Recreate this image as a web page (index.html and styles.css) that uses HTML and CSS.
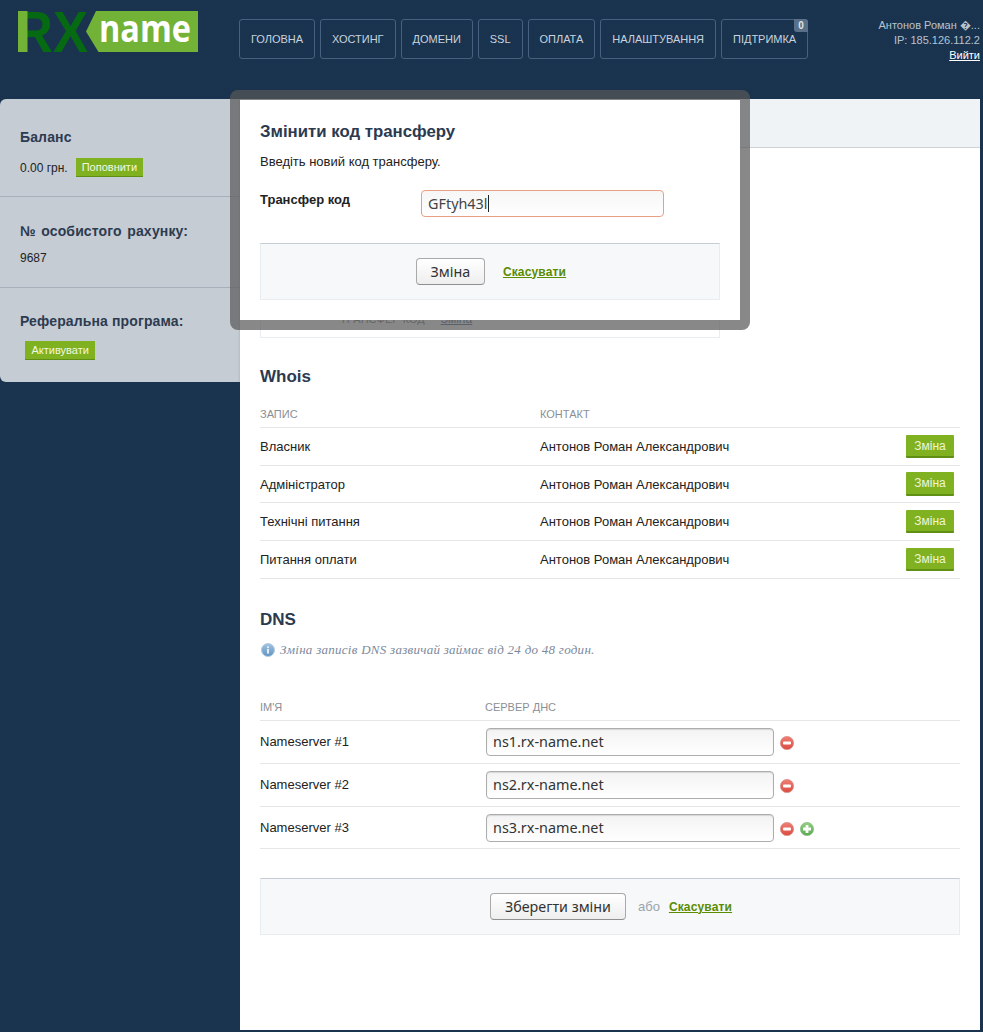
FILE: index.html
```html
<!DOCTYPE html>
<html lang="uk">
<head>
<meta charset="utf-8">
<title>RX name</title>
<link rel="stylesheet" href="styles.css">
</head>
<body>
<header class="top">
  <a class="logo">
    <svg width="180" height="41" viewBox="0 0 180 41">
      <path class="logo-bg" d="M78 0H180V41H80.5L68 20.5Z"/>
      <text class="logo-rx" x="-3" y="41" textLength="73" lengthAdjust="spacingAndGlyphs">RX</text>
      <rect class="logo-bar" x="0" y="0" width="9.5" height="41"/>
      <text class="logo-name" x="81" y="30.5" textLength="92" lengthAdjust="spacingAndGlyphs">name</text>
    </svg>
  </a>
  <nav class="nav">
    <a class="nav-item">ГОЛОВНА</a>
    <a class="nav-item">ХОСТИНГ</a>
    <a class="nav-item">ДОМЕНИ</a>
    <a class="nav-item">SSL</a>
    <a class="nav-item">ОПЛАТА</a>
    <a class="nav-item">НАЛАШТУВАННЯ</a>
    <a class="nav-item nav-badged">ПІДТРИМКА<span class="badge">0</span></a>
  </nav>
  <div class="user">
    <div>Антонов Роман �...</div>
    <div>IP: 185.126.112.2</div>
    <a class="logout">Вийти</a>
  </div>
</header>

<div class="layout">
  <aside class="side">
    <section class="side-box side-a">
      <h3>Баланс</h3>
      <div class="side-row">0.00 грн. <a class="btn-small btn-top">Поповнити</a></div>
    </section>
    <section class="side-box side-b">
      <h3>№ особистого рахунку:</h3>
      <div class="side-row">9687</div>
    </section>
    <section class="side-box side-c">
      <h3>Реферальна програма:</h3>
      <a class="btn-small btn-ref">Активувати</a>
    </section>
  </aside>

  <main class="main">
    <div class="tabs"></div>
    <div class="content">
      <div class="hidden-box"><span class="hb-label">ТРАНСФЕР КОД</span><a class="hb-link">Зміна</a></div>

      <h2 class="h-whois">Whois</h2>
      <div class="grid-row whois head"><span>ЗАПИС</span><span>КОНТАКТ</span><span></span></div>
      <div class="grid-row whois r38"><span>Власник</span><span>Антонов Роман Александрович</span><a class="btn-change">Зміна</a></div>
      <div class="grid-row whois r37"><span>Адміністратор</span><span>Антонов Роман Александрович</span><a class="btn-change">Зміна</a></div>
      <div class="grid-row whois r38"><span>Технічні питання</span><span>Антонов Роман Александрович</span><a class="btn-change">Зміна</a></div>
      <div class="grid-row whois r38"><span>Питання оплати</span><span>Антонов Роман Александрович</span><a class="btn-change">Зміна</a></div>

      <h2 class="h-dns">DNS</h2>
      <p class="note">
        <svg class="info" width="14" height="14" viewBox="0 0 14 14"><defs><linearGradient id="gb" x1="0" y1="0" x2="0" y2="1"><stop offset="0" stop-color="#a3c4e0"/><stop offset="1" stop-color="#5f92c2"/></linearGradient><linearGradient id="gr" x1="0" y1="0" x2="0" y2="1"><stop offset="0" stop-color="#ee8076"/><stop offset="1" stop-color="#dc4a40"/></linearGradient><linearGradient id="gg" x1="0" y1="0" x2="0" y2="1"><stop offset="0" stop-color="#93d07f"/><stop offset="1" stop-color="#57a94f"/></linearGradient></defs><circle cx="7" cy="7" r="6.5" fill="url(#gb)" stroke="#b3cbe0"/><rect x="6.1" y="6" width="1.8" height="4.6" fill="#eef4fa"/><rect x="6.1" y="3.4" width="1.8" height="1.7" fill="#eef4fa"/></svg>
        <em>Зміна записів DNS зазвичай займає від 24 до 48 годин.</em>
      </p>
      <div class="grid-row dns head"><span>ІМ'Я</span><span>СЕРВЕР ДНС</span></div>
      <div class="grid-row dns r43"><span>Nameserver #1</span><span class="ns"><input class="field" value="ns1.rx-name.net">
        <svg class="ico" width="14" height="14" viewBox="0 0 14 14"><circle cx="7" cy="7" r="6.6" fill="url(#gr)" stroke="#d98f88" stroke-width=".8"/><rect x="3" y="5.6" width="8" height="2.8" rx="1" fill="#fff"/></svg></span></div>
      <div class="grid-row dns r43"><span>Nameserver #2</span><span class="ns"><input class="field" value="ns2.rx-name.net">
        <svg class="ico" width="14" height="14" viewBox="0 0 14 14"><circle cx="7" cy="7" r="6.6" fill="url(#gr)" stroke="#d98f88" stroke-width=".8"/><rect x="3" y="5.6" width="8" height="2.8" rx="1" fill="#fff"/></svg></span></div>
      <div class="grid-row dns r42"><span>Nameserver #3</span><span class="ns"><input class="field" value="ns3.rx-name.net">
        <svg class="ico" width="14" height="14" viewBox="0 0 14 14"><circle cx="7" cy="7" r="6.6" fill="url(#gr)" stroke="#d98f88" stroke-width=".8"/><rect x="3" y="5.6" width="8" height="2.8" rx="1" fill="#fff"/></svg>
        <svg class="ico" width="14" height="14" viewBox="0 0 14 14"><circle cx="7" cy="7" r="6.6" fill="url(#gg)" stroke="#8fbf88" stroke-width=".8"/><path d="M5.6 3h2.8v2.6H11v2.8H8.4V11H5.6V8.4H3V5.6h2.6z" fill="#fff"/></svg></span></div>

      <div class="actions actions-page">
        <button class="btn">Зберегти зміни</button><span class="or">або</span><a class="cancel">Скасувати</a>
      </div>
    </div>
  </main>
</div>

<div class="modal">
  <h2>Змінити код трансферу</h2>
  <p class="modal-text">Введіть новий код трансферу.</p>
  <div class="modal-row">
    <label class="modal-label">Трансфер код</label>
    <span class="focus-field">GFtyh43l<i class="caret"></i></span>
  </div>
  <div class="actions actions-modal">
    <button class="btn btn-modal">Зміна</button><a class="cancel">Скасувати</a>
  </div>
</div>
</body>
</html>
```
FILE: styles.css
```css
* { box-sizing: border-box; }
html, body { margin: 0; padding: 0; }
body {
  position: relative;
  height: 1032px;
  overflow: hidden;
  background: repeating-conic-gradient(rgba(255, 255, 255, .012) 0 25%, rgba(0, 0, 0, .02) 0 50%) 0 0 / 2px 2px, #18334f;
  font-family: "Liberation Sans", Arial, sans-serif;
  font-size: 13px;
  color: #222;
}

/* header */
.top { display: flex; height: 99px; position: relative; }
.logo { display: block; margin: 11px 0 0 18px; width: 180px; height: 41px; }
.logo svg { display: block; overflow: visible; }
.logo-bg { fill: #72b236; }
.logo-bar { fill: #72b236; }
.logo-rx { fill: #066a13; font: bold 57px "Liberation Sans", sans-serif; }
.logo-name { fill: #fff; font: 700 37px "Open Sans", sans-serif; }
.nav { display: flex; gap: 5px; margin: 19px 0 0 41px; align-items: flex-start; }
.nav-item {
  position: relative;
  display: block;
  height: 40px;
  line-height: 38px;
  padding: 0 11px;
  border: 1px solid #46607f;
  border-radius: 3px;
  font-size: 11px;
  letter-spacing: -.02px;
  color: #c8d3de;
}
.badge {
  position: absolute;
  top: -1px;
  right: -1px;
  width: 14px;
  height: 13px;
  line-height: 13px;
  text-align: center;
  background: #5a7088;
  border-radius: 0 3px 0 3px;
  font-size: 10px;
  color: #dfe5ec;
  font-weight: bold;
}
.user {
  position: absolute;
  right: 3px;
  top: 18px;
  text-align: right;
  font-size: 11px;
  line-height: 15px;
  color: #b7c3cf;
}
.logout { color: #fff; text-decoration: underline; }

/* layout */
.layout { display: flex; align-items: flex-start; }
.side {
  width: 240px;
  height: 283px;
  background: #c5ccd4;
  border-radius: 6px 0 0 6px;
  overflow: hidden;
  box-shadow: inset -2px 0 2px -1px #b3bac3;
}
.side-box { padding: 0 0 0 20px; }
.side-a { height: 98px; border-bottom: 1px solid #a8b0bc; padding-top: 30px; }
.side-b { height: 91px; border-bottom: 1px solid #a8b0bc; padding-top: 26px; }
.side-c { height: 94px; padding-top: 25px; }
.side h3 { margin: 0; font-size: 14px; line-height: 16px; letter-spacing: .13px; color: #2d3b50; }
.side-b h3 { word-spacing: 1.5px; }
.side-row { font-size: 12px; line-height: 18px; display: flex; align-items: center; gap: 8px; }
.side-a .side-row { margin-top: 13px; }
.side-b .side-row { margin-top: 12px; line-height: 14px; }
.btn-small {
  display: block;
  height: 19px;
  line-height: 18px;
  padding: 0 6px;
  background: #80b121;
  border-bottom: 1px solid #5f8f14;
  font-size: 11px;
  color: #f2f8e0;
  white-space: nowrap;
}
.btn-ref { display: inline-block; margin: 12px 0 0 5px; padding: 0 6.5px; }

/* main */
.main { width: 740px; height: 931px; background: #fff; }
.tabs { height: 49px; background: #eff3f6; border-bottom: 1px solid #cdd2d7; }
.content { padding: 0 20px; }
.hidden-box {
  width: 460px;
  height: 190px;
  border: 1px solid #e8edf2;
  border-top: 0;
  padding: 164px 0 0 79px;
  color: #888;
  font-size: 11px;
  line-height: 14px;
}
.hb-label { margin-right: 16px; }
.hb-link { color: #5a7aa0; text-decoration: underline; font-size: 12px; }
h2 { margin: 0; font-size: 17px; line-height: 20px; color: #2b3a4f; }
.h-whois { margin-top: 29px; }
.grid-row { display: grid; align-items: center; border-bottom: 1px solid #e6e6e6; }
.whois { grid-template-columns: 280px 1fr auto; padding-right: 6px; }
.dns { grid-template-columns: 225px 1fr; }
.head { font-size: 11px; color: #8a8f96; }
.whois.head { height: 31px; margin-top: 10px; padding-top: 3px; }
.dns.head { height: 30px; padding-top: 3px; }
.r38 { height: 38px; }
.r37 { height: 37px; }
.r43 { height: 43px; padding-bottom: 1px; }
.r42 { height: 42px; }
.btn-change {
  display: block;
  width: 48px;
  height: 23.5px;
  line-height: 23px;
  text-align: center;
  background: #80b121;
  border-bottom: 2px solid #5f8f14;
  border-radius: 1px;
  font-size: 12px;
  color: #eef6d8;
}
.h-dns { margin-top: 31px; }
.note { display: flex; align-items: center; gap: 5px; margin: 10px 0 0; height: 20px; }
.note em { font-family: "Liberation Serif", serif; font-size: 13px; color: #7d8a9c; letter-spacing: .27px; }
.info { flex: none; margin-left: 1px; }
.note + .grid-row { margin-top: 31px; }
.ns { display: flex; align-items: center; gap: 6px; }
.field {
  width: 288px;
  height: 28px;
  margin-left: 1px;
  padding: 0 6px;
  border: 1px solid #adadad;
  border-radius: 4px;
  background: linear-gradient(#f3f3f3, #fff);
  box-shadow: inset 0 1px 1px rgba(0, 0, 0, .12);
  font: 14.4px "Noto Sans", sans-serif;
  color: #333;
}
.ico { flex: none; margin-top: 3px; }
.actions {
  display: flex;
  align-items: center;
  justify-content: center;
  height: 57px;
  padding-left: 2px;
  background: #f7f8fa;
  border: 1px solid #e8edf2;
  border-top-color: #c5ccd6;
}
.actions-page { margin-top: 29px; }
.btn {
  height: 27px;
  padding: 0 14px;
  border: 1px solid #a9a9a9;
  border-bottom-color: #8f8f8f;
  border-radius: 4px;
  background: linear-gradient(#fff, #eeeeee);
  font: 14.3px "Noto Sans", sans-serif;
  color: #333;
}
.or { margin: 0 9px 0 12px; color: #9aa3ad; font-size: 13px; }
.cancel { font-size: 12px; font-weight: bold; letter-spacing: .15px; color: #5b8c00; text-decoration: underline; }

/* modal */
.modal {
  position: absolute;
  left: 230px;
  top: 90px;
  width: 520px;
  height: 240px;
  padding: 20px;
  background: #fff;
  background-clip: padding-box;
  border: 10px solid rgba(87, 87, 87, .71);
  border-radius: 8px;
}
.modal h2 { line-height: 22px; font-size: 16.8px; margin-top: 1px; }
.modal-text { margin: 11px 0 0; font-size: 13px; line-height: 16px; color: #222; }
.modal-row { display: flex; align-items: flex-start; margin-top: 20px; height: 53px; }
.modal-label { width: 161px; font-size: 13px; font-weight: bold; line-height: 20px; }
.focus-field {
  display: flex;
  align-items: center;
  width: 243px;
  height: 27px;
  padding: 0 6px;
  border: 1px solid #e8a085;
  border-radius: 4px;
  background: linear-gradient(#f6f6f6, #fff);
  font: 14.4px "Noto Sans", sans-serif;
  color: #444;
}
.caret { display: block; width: 1px; height: 17px; background: #222; }
.btn-modal { width: 69px; padding: 0; margin-right: 18px; }
```
